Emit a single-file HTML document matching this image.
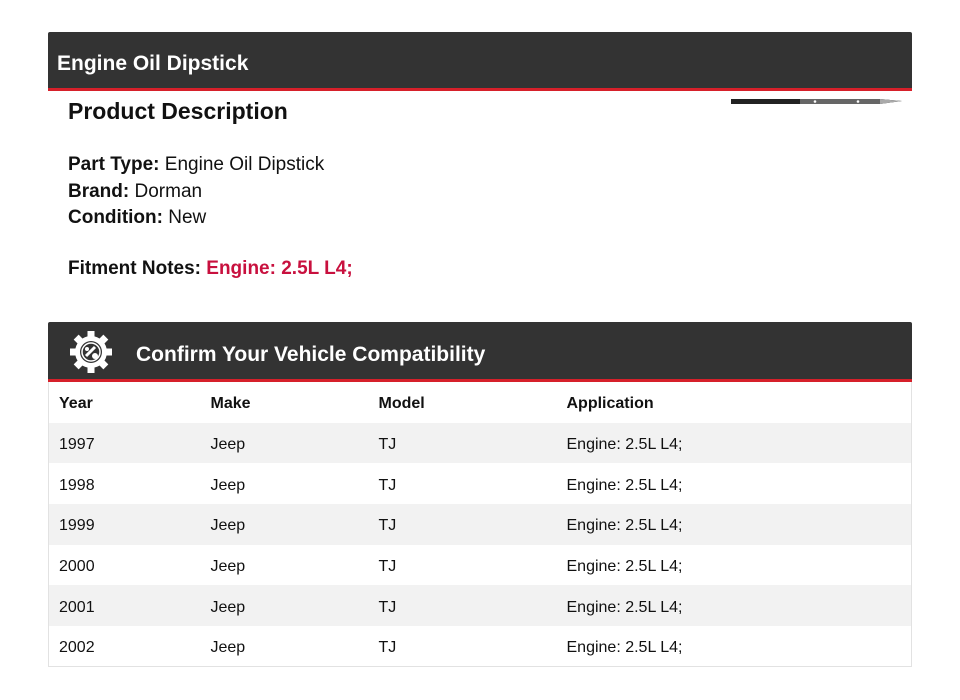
<!DOCTYPE html>
<html><head><meta charset="utf-8"><style>
body{margin:0;background:#fff;font-family:"Liberation Sans","DejaVu Sans",sans-serif;color:#111;width:960px;height:700px;overflow:hidden;position:relative}
.bar{position:absolute;left:48px;width:864px;background:#333;border-bottom:3px solid #d6202a;border-radius:2px 2px 0 0;color:#fff;font-weight:bold}
.b1{top:32px;height:56px}
.b1 span{position:absolute;left:9px;top:20px;font-size:21px}
.b2{top:322px;height:57px}
.b2 span{position:absolute;left:88px;top:21px;font-size:21px}
h2{position:absolute;left:68px;top:98px;margin:0;font-size:23px}
.info{position:absolute;left:68px;top:152px;font-size:19px;line-height:26.5px}
.fit{position:absolute;left:68px;top:258px;font-size:19px;font-weight:bold}
.fit em{font-style:normal;color:#c8103e}
table{position:absolute;left:48px;top:382px;width:864px;border-collapse:collapse;border:1px solid #e2e2e2;border-top:none;font-size:16px;table-layout:fixed}
td,th{height:40.7px;padding:4px 0 0 10px;box-sizing:border-box;text-align:left;vertical-align:middle}
th{font-weight:bold}
tr:nth-child(even) td{background:#f2f2f2}
</style></head><body>
<div class="bar b1"><span>Engine Oil Dipstick</span></div>
<h2>Product Description</h2>
<svg style="position:absolute;left:730px;top:96px" width="175" height="12"><path d="M1 3 L150 3 L172 5 L150 8 L1 8Z" fill="#222"/><rect x="70" y="3" width="80" height="5" fill="#666"/><circle cx="85" cy="5.5" r="1.3" fill="#fff"/><circle cx="128" cy="5.5" r="1.3" fill="#fff"/><path d="M150 3 L172 5 L150 8Z" fill="#aaa"/></svg>
<div class="info"><b>Part Type:</b> Engine Oil Dipstick<br><b>Brand:</b> Dorman<br><b>Condition:</b> New</div>
<div class="fit">Fitment Notes: <em>Engine: 2.5L L4;</em></div>
<div class="bar b2">
<svg style="position:absolute;left:21px;top:8px" width="44" height="44" viewBox="-22 -22 44 44">
<g fill="#fff"><circle r="16"/>
<g id="t"><rect x="-3.5" y="-21" width="7" height="8"/></g>
<use href="#t" transform="rotate(45)"/><use href="#t" transform="rotate(90)"/><use href="#t" transform="rotate(135)"/><use href="#t" transform="rotate(180)"/><use href="#t" transform="rotate(225)"/><use href="#t" transform="rotate(270)"/><use href="#t" transform="rotate(315)"/></g>
<circle r="11" fill="#333"/><circle r="9" fill="none" stroke="#fff" stroke-width="1.5"/>
<path d="M-5 4 L4 -5" stroke="#fff" stroke-width="3"/><circle cx="4" cy="4" r="3" fill="#fff"/><circle cx="-4" cy="-3" r="2" fill="#fff"/>
</svg>
<span>Confirm Your Vehicle Compatibility</span></div>
<table>
<colgroup><col style="width:152px"><col style="width:168px"><col style="width:188px"><col></colgroup>
<tr><th>Year</th><th>Make</th><th>Model</th><th>Application</th></tr>
<tr><td>1997</td><td>Jeep</td><td>TJ</td><td>Engine: 2.5L L4;</td></tr>
<tr><td>1998</td><td>Jeep</td><td>TJ</td><td>Engine: 2.5L L4;</td></tr>
<tr><td>1999</td><td>Jeep</td><td>TJ</td><td>Engine: 2.5L L4;</td></tr>
<tr><td>2000</td><td>Jeep</td><td>TJ</td><td>Engine: 2.5L L4;</td></tr>
<tr><td>2001</td><td>Jeep</td><td>TJ</td><td>Engine: 2.5L L4;</td></tr>
<tr><td>2002</td><td>Jeep</td><td>TJ</td><td>Engine: 2.5L L4;</td></tr>
</table>
</body></html>
